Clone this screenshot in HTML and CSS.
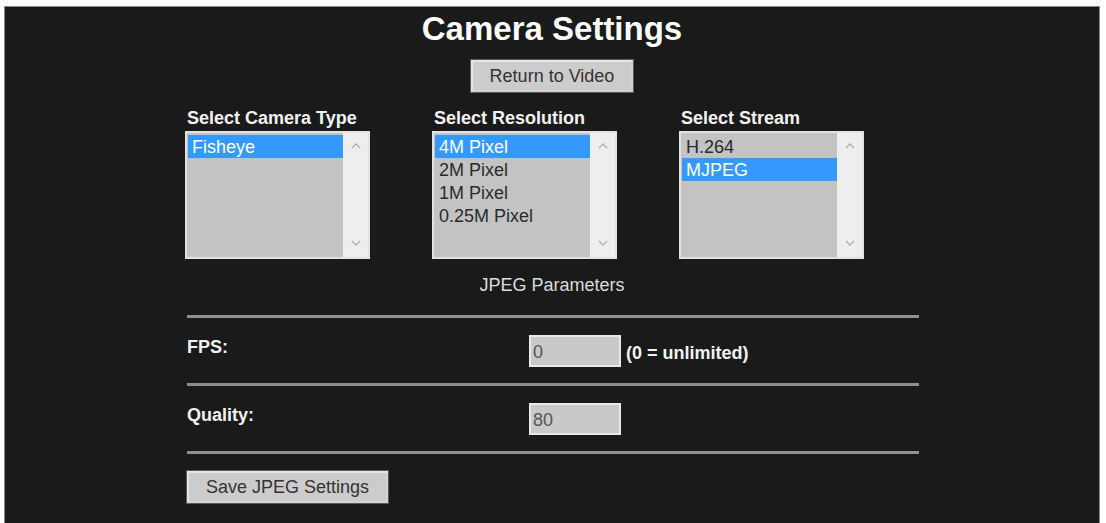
FILE: index.html
```html
<!DOCTYPE html>
<html lang="en">
<head>
<meta charset="utf-8">
<title>Camera Settings</title>
<link rel="stylesheet" href="styles.css">
</head>
<body>
<main class="panel">
  <h1 class="title">Camera Settings</h1>
  <div class="top-action">
    <button class="btn" type="button">Return to Video</button>
  </div>

  <div class="content">
    <div class="pickers">
      <div class="picker">
        <div class="picker-label">Select Camera Type</div>
        <div class="listbox" role="listbox">
          <ul class="options">
            <li class="option is-selected">Fisheye</li>
          </ul>
          <div class="scrollbar">
            <svg class="arrow" width="10" height="6" viewBox="0 0 10 6"><polyline points="1,5 5,1 9,5"/></svg>
            <svg class="arrow" width="10" height="6" viewBox="0 0 10 6"><polyline points="1,1 5,5 9,1"/></svg>
          </div>
        </div>
      </div>

      <div class="picker">
        <div class="picker-label">Select Resolution</div>
        <div class="listbox" role="listbox">
          <ul class="options">
            <li class="option is-selected">4M Pixel</li>
            <li class="option">2M Pixel</li>
            <li class="option">1M Pixel</li>
            <li class="option">0.25M Pixel</li>
          </ul>
          <div class="scrollbar">
            <svg class="arrow" width="10" height="6" viewBox="0 0 10 6"><polyline points="1,5 5,1 9,5"/></svg>
            <svg class="arrow" width="10" height="6" viewBox="0 0 10 6"><polyline points="1,1 5,5 9,1"/></svg>
          </div>
        </div>
      </div>

      <div class="picker">
        <div class="picker-label">Select Stream</div>
        <div class="listbox" role="listbox">
          <ul class="options">
            <li class="option">H.264</li>
            <li class="option is-selected">MJPEG</li>
          </ul>
          <div class="scrollbar">
            <svg class="arrow" width="10" height="6" viewBox="0 0 10 6"><polyline points="1,5 5,1 9,5"/></svg>
            <svg class="arrow" width="10" height="6" viewBox="0 0 10 6"><polyline points="1,1 5,5 9,1"/></svg>
          </div>
        </div>
      </div>
    </div>

    <div class="section-title">JPEG Parameters</div>
    <hr class="rule">

    <div class="param-row">
      <span class="param-label">FPS:</span>
      <div class="param-field">
        <input class="field" type="text" value="0">
        <span class="hint">(0 = unlimited)</span>
      </div>
    </div>
    <hr class="rule">

    <div class="param-row">
      <span class="param-label">Quality:</span>
      <div class="param-field">
        <input class="field" type="text" value="80">
      </div>
    </div>
    <hr class="rule">

    <div class="save-row">
      <button class="btn" type="button">Save JPEG Settings</button>
    </div>
  </div>
</main>
</body>
</html>
```

FILE: styles.css
```css
html, body {
  margin: 0;
  padding: 0;
  background: #ffffff;
  overflow: hidden;
}

body {
  font-family: "Liberation Sans", Arial, sans-serif;
  font-size: 18px;
  color: #f0f0f0;
}

.panel {
  margin: 6px 6px 0 4px;
  min-height: calc(100vh - 6px);
  box-sizing: border-box;
  background: #1a1a1a;
  border: 1px solid #8a8a8a;
  border-bottom: none;
  padding-top: 3px;
}

.title {
  margin: 0;
  font-size: 33px;
  line-height: 38px;
  font-weight: bold;
  color: #ffffff;
  text-align: center;
}

.top-action {
  display: flex;
  justify-content: center;
  margin-top: 12px;
}

.btn {
  font-family: "Liberation Sans", Arial, sans-serif;
  font-size: 18px;
  color: #333333;
  height: 32px;
  padding: 0 17px;
  background: #cccccc;
  border: 2px solid #e6e6e6;
  border-right-color: #d2d2d2;
  border-bottom-color: #d2d2d2;
  box-shadow: 0 0 0 1px #5a5a5a;
  border-radius: 0;
  cursor: pointer;
}

.content {
  width: 734px;
  margin: 0 auto;
}

/* three list pickers */
.pickers {
  display: grid;
  grid-template-columns: 247px 247px 240px;
  margin-top: 16px;
}

.picker-label {
  font-weight: bold;
  line-height: 21px;
  padding-left: 2px;
  margin-bottom: 2px;
  color: #f2f2f2;
}

.listbox {
  display: flex;
  width: 185px;
  height: 128px;
  box-sizing: border-box;
  border: 2px solid #e2e2e2;
  background: #c3c3c3;
}

.options {
  list-style: none;
  margin: 0;
  padding: 2px 0 0 1px;
  flex: 1;
}

.option {
  height: 23px;
  box-sizing: border-box;
  padding: 2px 0 0 4px;
  line-height: 20px;
  color: #2a2a2a;
  white-space: nowrap;
}

.option.is-selected {
  background: #3399ff;
  color: #ffffff;
}

.scrollbar {
  width: 25px;
  background: #eeeeee;
  display: flex;
  flex-direction: column;
  justify-content: space-between;
  align-items: center;
  padding: 10px 0 11px;
  box-sizing: border-box;
}

.arrow polyline {
  fill: none;
  stroke: #b0b0b0;
  stroke-width: 1.4;
}

.section-title {
  margin-top: 16px;
  line-height: 21px;
  text-align: center;
  color: #dddddd;
}

.rule {
  margin: 19px 0 0 2px;
  height: 3px;
  border: none;
  background: #8f8f8f;
}

.param-row + .rule {
  margin-top: 0;
}

/* label / field rows */
.param-row {
  display: grid;
  grid-template-columns: 342px auto;
  padding: 17px 0 16px 2px;
}

.param-label {
  font-weight: bold;
  line-height: 21px;
  margin-top: 2px;
  color: #f2f2f2;
}

.param-field {
  display: flex;
  align-items: center;
  gap: 5px;
}

.field {
  width: 92px;
  height: 32px;
  box-sizing: border-box;
  padding: 3px 0 0 2px;
  font-family: "Liberation Sans", Arial, sans-serif;
  font-size: 18px;
  color: #555555;
  background: #c9c9c9;
  border: 2px solid #e8e8e8;
  border-radius: 0;
  outline: none;
}

.hint {
  font-weight: bold;
  color: #f2f2f2;
  margin-top: 4px;
}

.save-row {
  padding: 17px 0 0 2px;
}
```
